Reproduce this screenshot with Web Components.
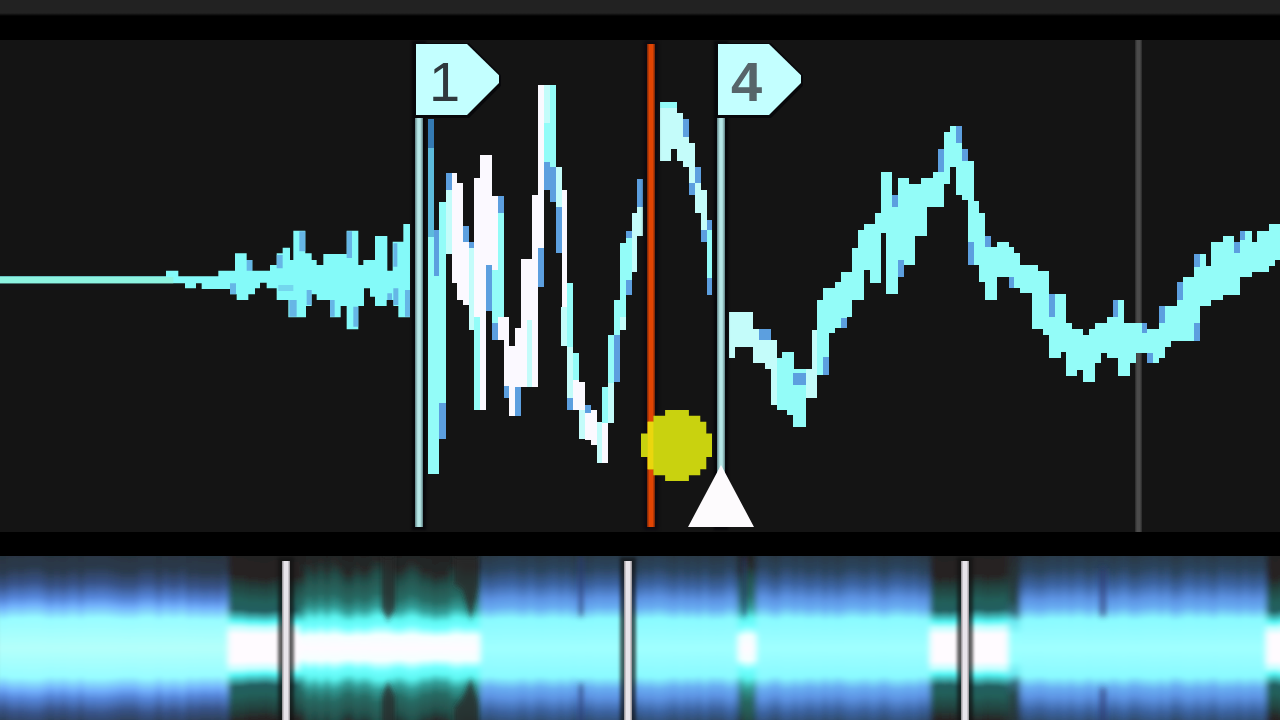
<!DOCTYPE html>
<html lang="en">
<head>
<meta charset="utf-8">
<title>Waveform deck</title>
<style>
body { margin: 0; background: #000; font-family: "Liberation Sans", Arial, sans-serif; }
</style>
</head>
<body>
<wave-deck></wave-deck>
<script>
const deckWidth = 1280;
const tones = {
  c: '#93fcf8', w: '#fbf9ff', l: '#c4fcfa', b: '#5c9fdf', d: '#347ab3', a: '#5cbbdc'
};

/* Samples are kept in thirds of a unit: left, right, top, bottom, tone. */
const sections = [
  { x: 405, y: 30, bars: `68 88 268 355 d;68 88 355 640 a;68 103 620 1332 c;88 103 600 738 b;103 122 515 1120 c;103 122 1120 1228 b;
    122 140 430 480 b;122 140 480 672 l;140 157 430 758 w;157 175 460 810 w;175 192 587 637 b;175 192 637 825 w;192 208 637 655 b;
    192 208 655 900 l;208 225 445 860 w;208 225 860 1140 c;225 243 375 1140 w;243 262 375 705 w;243 262 705 843 b;
    262 278 497 870 w;262 278 720 880 c;262 278 880 930 b;278 297 497 550 b;278 297 550 860 c;278 297 860 930 w;
    297 312 860 1068 w;297 312 1068 1105 b;312 330 948 1158 w;330 348 895 1070 w;330 348 1070 1158 b;348 382 688 1070 w;
    365 382 870 1070 l;382 400 495 1070 w;400 417 165 655 w;400 417 655 770 b;417 435 165 280 l;417 435 280 395 c;
    417 435 395 480 b;435 452 165 410 c;435 452 410 515 b;452 470 410 530 l;452 470 530 670 b;470 487 480 948 w;
    468 487 830 948 l;487 505 760 950 c;487 505 950 1105 l;487 505 1105 1140 b;505 522 968 1050 c;505 522 1050 1140 w;
    522 540 1055 1140 w;522 540 1140 1228 l;540 557 1125 1150 b;540 557 1150 1230 w;557 575 1140 1245 w;575 592 1175 1298 l;
    592 610 1072 1180 c;592 610 1180 1298 w;610 627 915 1060 c;610 627 1060 1178 l;627 645 810 915 c;627 645 915 1055 b;
    645 662 640 860 c;645 662 860 900 l;662 680 602 625 b;662 680 625 750 c;662 680 750 795 b;680 697 548 725 l;
    697 715 447 532 b;697 715 532 617 l` },
  { x: 640, y: 30, bars: `60 110 215 235 c;60 92 235 392 l;92 110 235 358 l;110 130 250 392 l;130 148 268 320 b;130 148 320 410 l;
    148 165 340 460 l;148 165 460 495 b;165 182 410 460 b;165 182 460 548 l;182 200 480 600 l;182 200 600 635 b;
    200 217 570 600 b;200 217 600 745 c;200 217 745 795 b;267 285 845 985 l;285 340 845 950 l;340 375 897 1000 l;
    357 392 897 930 b;375 392 930 1018 l;392 410 930 1125 l;410 425 985 1140 c;425 462 965 1140 c;440 458 1100 1155 c;
    458 497 1018 1192 c;458 497 1030 1065 b;497 515 1018 1105 l;515 532 900 1105 l;532 550 810 1035 c;550 567 775 980 c;
    550 567 980 1035 b;567 585 775 910 c;585 602 755 895 c;602 620 725 895 c;602 620 865 895 b;620 635 725 860 c;
    635 660 655 810 c;655 660 600 655 c` },
  { x: 860, y: 110, bars: `0 12 360 570 c;12 30 342 480 c;30 45 342 520 c;45 62 310 520 c;62 78 187 370 c;78 97 187 552 c;
    97 115 255 290 b;97 115 290 552 c;115 132 205 450 c;115 132 450 500 b;132 148 205 465 c;148 165 222 465 c;165 183 222 378 c;
    183 200 205 378 c;200 218 205 290 c;218 235 187 290 c;235 253 118 187 b;235 253 187 290 c;253 270 65 222 c;
    270 288 47 170 c;288 306 47 110 b;288 306 100 255 c;306 323 118 160 b;306 323 152 270 c;323 342 152 465 c;
    323 342 395 465 b;342 358 272 465 c;358 375 308 515 c;375 393 378 412 b;375 393 412 570 c;393 411 412 570 c;
    411 447 395 500 c;447 463 412 500 c;447 463 500 535 b;463 480 430 535 c;480 515 465 550 c;515 533 465 657 c;
    533 550 482 657 c;550 567 482 675 c;567 585 552 620 b;567 585 620 745 c;585 602 552 745 c;602 618 552 725 c;602 618 690 725 b` },
  { x: 1060, y: 200, bars: `0 18 285 455 c;18 35 370 527 c;35 52 388 527 c;52 70 388 510 c;70 88 405 545 c;88 105 388 545 c;
    105 122 370 490 c;122 140 370 460 c;140 158 350 475 c;158 175 300 350 b;158 175 350 475 c;175 193 300 527 c;193 210 368 527 c;
    210 228 368 490 c;228 245 368 458 c;245 262 370 400 b;245 262 400 460 c;262 280 388 460 c;262 280 460 490 b;280 298 388 490 c;
    298 315 318 370 b;298 315 370 475 c;315 333 318 440 c;333 350 318 422 c;350 368 247 300 b;350 368 300 422 c;368 402 232 422 c;
    402 420 162 200 b;402 420 200 370 c;402 420 370 422 b;420 438 162 318 c;438 453 197 318 c;453 488 127 300 c;
    488 523 108 285 c;523 541 127 160 b;523 541 160 285 c;541 576 92 232 c;541 555 92 120 b;576 592 127 215 c;
    592 628 92 215 c;628 645 73 197 c;645 660 73 180 c` }
];

const intro = 'M0 229H498V212H535V229H655V212H705V160H740V180H757V212H810V195H830V160H848V143H870V180H880V92H916V160H935V180H950V195H970V162H1040V92H1075V195H1090V180H1125V108H1162V212H1178V125H1210V72H1230V352H1195V318H1180V300H1160V318H1125V290H1110V265H1092V318H1075V388H1040V318H1022V352H990V300H950V283H935V318H918V352H865V300H830V265H800V248H780V265H765V283H745V300H710V283H690V267H605V250H588V265H555V250H0Z';

function drawSection({ x, y, bars }) {
  const rects = bars.split(';').map(row => {
    const [l, r, t, b, tone] = row.trim().split(/\s+/);
    return `<rect x="${l}" y="${t}" width="${r - l}" height="${b - t}" fill="${tones[tone]}"/>`;
  }).join('');
  return `<g transform="translate(${x} ${y}) scale(.33333)" shape-rendering="crispEdges">${rects}</g>`;
}

class DetailWave extends HTMLElement {
  constructor() {
    super();
    this.attachShadow({ mode: 'open' }).innerHTML = `
      <style>
        :host { display: block; position: relative; min-height: 0; overflow: hidden; background: #141414; }
        svg { display: block; position: relative; width: 100%; height: 100%; }
      </style>
      <slot name="grid"></slot>
      <svg viewBox="0 40 1280 492" preserveAspectRatio="none" role="img" aria-label="Detail waveform">
        <g transform="translate(0 200) scale(.33333)">
          <path d="${intro}" fill="#84faf9"/>
          <path d="M0 231H520V250H0Z" fill="#8df3df"/>
          <g fill="#5c9fdf">
            <path d="M740 180h17v32h-17zM830 165h18v40h-18zM690 250h18v33h-18zM898 94h18v60h-18zM1040 94h16v80h-16zM1060 320h15v60h-15zM868 300h22v50h-22zM920 270h15v45h-15zM990 300h14v50h-14zM1180 130h12v70h-12zM1180 265h15v50h-15zM1215 270h15v80h-15zM1162 280h14v20h-14z" opacity=".75"/>
            <path d="M835 255h45v18h-45z" opacity=".4"/>
          </g>
        </g>
        ${sections.map(drawSection).join('')}
      </svg>
      <slot></slot>`;
  }
}
customElements.define('detail-wave', DetailWave);

class GridLine extends HTMLElement {
  constructor() {
    super();
    this.attachShadow({ mode: 'open' }).innerHTML = `
      <style>
        :host { display: block; position: absolute; top: 0; bottom: 0; width: 7px; left: calc(100% * var(--at) / ${deckWidth});
          background: linear-gradient(90deg, #282828, #4b4b4b 30%, #4b4b4b 70%, #282828); }
      </style>`;
    this.style.setProperty('--at', this.getAttribute('at'));
  }
}
customElements.define('grid-line', GridLine);

class PlayHead extends HTMLElement {
  constructor() {
    super();
    this.attachShadow({ mode: 'open' }).innerHTML = `
      <style>
        :host { display: block; position: absolute; top: 4px; bottom: 5px; width: 8px; left: calc(100% * var(--at) / ${deckWidth});
          background: linear-gradient(90deg, #6e2408, #e04403 30%, #e04403 70%, #6e2408); box-shadow: 0 0 3px 3px #0c0a10; }
        svg { position: absolute; left: -6px; bottom: 46px; width: 71px; height: 71px; }
      </style>
      <svg viewBox="5 420 212 212" aria-hidden="true">
        <path fill="#c9d20f" d="M77 420H148V437H182V455H200V490H217V560H200V597H182V615H148V632H77V615H42V597H25V560H5V490H25V455H42V437H77Z"/>
        <path fill="#ead60e" d="M25 455H42V597H25Z"/>
      </svg>`;
    this.style.setProperty('--at', this.getAttribute('at'));
  }
}
customElements.define('play-head', PlayHead);

class CueMarker extends HTMLElement {
  constructor() {
    super();
    this.attachShadow({ mode: 'open' }).innerHTML = `
      <style>
        :host { display: block; position: absolute; top: 4px; bottom: 5px; width: 8px; left: calc(100% * var(--at) / ${deckWidth}); }
        .stem { height: 100%; background: linear-gradient(90deg, #5f8084, #b4e6e6 35%, #b4e6e6 65%, #5f8084); box-shadow: 0 0 2px 3px #08080b; }
        button { position: absolute; left: 1px; top: 0; width: 83px; height: 71px; margin: 0; padding: 4px 0 0 13px; border: 0;
          background: #c3ffff; color: #30393d; font: 56px/68px "Liberation Sans", Arial, sans-serif; text-align: left;
          clip-path: polygon(0 0, 51px 0, 100% 44%, 100% 55%, 51px 100%, 0 100%); }
        .shade { position: absolute; left: -2px; top: -1px; width: 88px; height: 75px; background: #08080b;
          clip-path: polygon(0 0, 56px 0, 100% 43%, 100% 57%, 56px 100%, 0 100%); }
        :host([soft]) button { color: #56656a; font-weight: 700; }
        .foot { display: none; position: absolute; left: -29px; bottom: 0; width: 66px; height: 62px; }
        :host([current]) .foot { display: block; }
      </style>
      <div class="stem"></div>
      <div class="shade"></div>
      <button type="button"><slot></slot></button>
      <svg class="foot" viewBox="0 0 66 62" aria-hidden="true">
        <path d="M33 0L66 62H0Z" fill="#fdfbfd"/>
      </svg>`;
    this.style.setProperty('--at', this.getAttribute('at'));
  }
}
customElements.define('cue-marker', CueMarker);

/* Which kind of sound each stretch of the track holds. */
const stretches = [
  [0, 226, 'bass'], [226, 300, 'quiet'], [300, 483, 'high'], [483, 740, 'deep'], [740, 754, 'high'],
  [754, 932, 'deep'], [932, 1006, 'quiet'], [1006, 1018, 'dim'], [1018, 1266, 'deep'], [1266, 1290, 'quiet']
];
const ramps = {
  bass: ['#28343f', 0, '#2b3a4d', 9, '#38548a', 17, '#5585d8', 24, '#70adfa', 28, '#98fdff', 35, '#b4fffb', 50],
  deep: ['#293844', 0, '#2c4560', 9, '#3c64a2', 17, '#5c92e2', 24, '#69aef2', 29, '#8afaff', 35, '#a0ffff', 50],
  quiet: ['#242424', 0, '#262424', 12, '#23433f', 18, '#235e59', 25, '#245f60', 30, '#55f6f5', 36, '#c2ffff', 39, '#fffbff', 43, '#fffbff', 50],
  high: ['#232424', 0, '#252727', 8, '#24514c', 15, '#276b64', 24, '#329e98', 30, '#5df7f2', 35, '#74ffff', 39, '#f4ffff', 44, '#fffbff', 50],
  dim: ['#242a30', 0, '#273235', 12, '#26484a', 25, '#326a7b', 31, '#69e6ef', 36, '#93ffff', 43, '#a0ffff', 50]
};
function rampDef(name) {
  const list = ramps[name];
  const half = [];
  for (let i = 0; i < list.length; i += 2) half.push([list[i], list[i + 1]]);
  const all = half.concat(half.slice().reverse().map(([c, p]) => [c, 100 - p]));
  return `<linearGradient id="${name}" gradientUnits="userSpaceOnUse" x1="0" x2="0" y1="-95" y2="95">` +
    all.map(([c, p]) => `<stop offset="${p}%" stop-color="${c}"/>`).join('') + '</linearGradient>';
}
function overviewColumns() {
  let out = '';
  for (let x = -6; x < 1290; x += 6) {
    const kind = (stretches.find(s => x + 3 < s[1]) || stretches[0])[2];
    const n = Math.abs(Math.sin(x * 12.9898) * 43758.5453) % 1;
    const spread = kind === 'high' ? .28 : .1;
    const s = 1 + (n - .5) * spread;
    out += `<rect x="${x}" y="-130" width="7" height="260" fill="url(#${kind})" transform="scale(1 ${s.toFixed(3)})"/>`;
  }
  return out;
}

class TrackOverview extends HTMLElement {
  constructor() {
    super();
    this.attachShadow({ mode: 'open' }).innerHTML = `
      <style>
        :host { display: block; position: relative; min-height: 0; overflow: hidden; background: #222; }
        svg { display: block; width: 100%; height: 100%; }
      </style>
      <svg viewBox="0 556 1280 164" preserveAspectRatio="none" role="img" aria-label="Track overview">
        <defs>
          ${Object.keys(ramps).map(rampDef).join('')}
          <filter id="blend" x="0" y="0" width="1" height="1"><feGaussianBlur stdDeviation="3 1"/></filter>
          <filter id="smear" x="-1" y="-.2" width="3" height="1.4"><feGaussianBlur stdDeviation="2 3"/></filter>
        </defs>
        <g transform="translate(0 648)">
          <g filter="url(#blend)">${overviewColumns()}</g>
          <g filter="url(#smear)" fill="#26282a">
            <path d="M382 -92h13v54l-7 10-6-10zM382 92h13V48l-7-14-6 14zM454 -92h24v30l-7 34-8-30-9-6zM454 92h24V56l-7-26-8 20-9 10z" opacity=".75"/>
            <path d="M578 -92h6v60h-6zM578 92h6V36h-6zM1099 -80h8v48h-8zM1099 80h8V40h-8zM742 -92h5v60h-5z" fill="#2c3a70" opacity=".5"/>
          </g>
        </g>
      </svg>
      <slot></slot>`;
  }
}
customElements.define('track-overview', TrackOverview);

class OverviewMarker extends HTMLElement {
  constructor() {
    super();
    this.attachShadow({ mode: 'open' }).innerHTML = `
      <style>
        :host { display: block; position: absolute; top: 5px; bottom: 0; width: 8px; left: calc(100% * var(--at) / ${deckWidth});
          background: linear-gradient(90deg, #8e8a8e, #e8e4ea 30%, #e8e4ea 70%, #8e8a8e); box-shadow: 0 0 3px 4px #111a; }
      </style>`;
    this.style.setProperty('--at', this.getAttribute('at'));
  }
}
customElements.define('overview-marker', OverviewMarker);

class WaveDeck extends HTMLElement {
  constructor() {
    super();
    this.attachShadow({ mode: 'open' }).innerHTML = `
      <style>
        :host { display: grid; height: 100vh; grid-template-rows: 16px minmax(0, 3fr) minmax(0, 1fr); row-gap: 24px; background: #000; }
        header { background: linear-gradient(#222 13px, #000); }
      </style>
      <header></header>
      <detail-wave>
        <grid-line slot="grid" at="1135"></grid-line>
        <cue-marker at="415">1</cue-marker>
        <cue-marker at="717" soft current>4</cue-marker>
        <play-head at="647"></play-head>
      </detail-wave>
      <track-overview>
        <overview-marker at="282"></overview-marker>
        <overview-marker at="624"></overview-marker>
        <overview-marker at="961"></overview-marker>
      </track-overview>`;
  }
}
customElements.define('wave-deck', WaveDeck);
</script>
</body>
</html>
